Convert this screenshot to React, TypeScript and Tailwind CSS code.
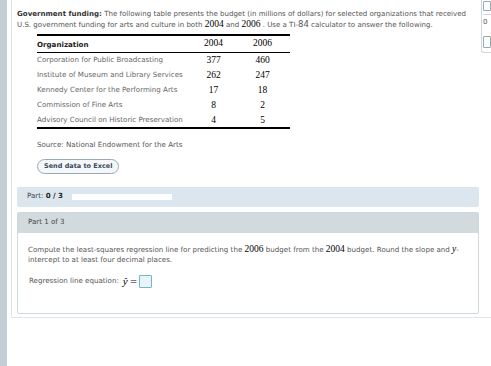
import React from 'react';

const rows = [
  { org: 'Corporation for Public Broadcasting', a: '377', b: '460' },
  { org: 'Institute of Museum and Library Services', a: '262', b: '247' },
  { org: 'Kennedy Center for the Performing Arts', a: '17', b: '18' },
  { org: 'Commission of Fine Arts', a: '8', b: '2' },
  { org: 'Advisory Council on Historic Preservation', a: '4', b: '5' },
];

const sans = "font-['DejaVu_Sans',Verdana,sans-serif]";
const serif = "font-['Liberation_Serif',serif]";

const App: React.FC = () => {
  return (
    <div className={`relative flex h-[366px] w-[491px] overflow-hidden bg-white ${sans}`}>
      <div className="h-full w-[7px] shrink-0 bg-[#c3ced4]" />
      <div className="ml-[4px] h-[318px] flex-1 border-b border-l border-[#dfe5e8]">
        {/* intro */}
        <div className="whitespace-nowrap pl-[5px] pt-[9px] text-[7.05px] leading-[10px] text-[#555]">
          <p>
            <b className="text-[#333]">Government funding:</b> The following table presents the budget (in millions of dollars) for selected organizations that received
          </p>
          <p>
            U.S. government funding for arts and culture in both <span className={`${serif} text-[9.5px] text-black`}>2004</span> and{' '}
            <span className={`${serif} text-[9.5px] text-black`}>2006</span> . Use a TI-<span className="text-[8.5px]">84</span> calculator to answer the following.
          </p>
        </div>

        {/* table */}
        <table className="ml-[25px] mt-[4px] w-[253px] border-y-2 border-black text-[7.1px] text-[#666]">
          <thead>
            <tr className="h-[15px] border-b border-black">
              <th className="pt-[3px] text-left font-bold text-[#222]">Organization</th>
              <th className={`${serif} w-[51px] pb-[2px] text-[9.5px] font-normal text-black`}>2004</th>
              <th className={`${serif} w-[51px] pb-[2px] pr-[4px] text-[9.5px] font-normal text-black`}>2006</th>
            </tr>
          </thead>
          <tbody>
            {rows.map((r) => (
              <tr key={r.org} className="h-[15px]">
                <td className="whitespace-nowrap">{r.org}</td>
                <td className={`${serif} text-center text-[9.5px] text-black`}>{r.a}</td>
                <td className={`${serif} pr-[4px] text-center text-[9.5px] text-black`}>{r.b}</td>
              </tr>
            ))}
          </tbody>
        </table>

        <p className="ml-[25px] mt-[11px] text-[7.1px] text-[#555]">Source: National Endowment for the Arts</p>
        <button className="ml-[25px] mt-[6px] rounded-full border border-[#9aaab3] bg-[#f5f8fa] px-[6px] py-[2px] text-[6.5px] font-bold text-[#3b4a5a]">
          Send data to Excel
        </button>

        {/* part bar */}
        <div className="ml-[5px] mr-[12px] mt-[12px] flex h-[20px] items-center gap-[9px] rounded-[2px] bg-[#dce6ee] pl-[10px] text-[7.1px] text-[#444]">
          <span>
            Part: <b className="text-[#222]">0 / 3</b>
          </span>
          <div className="h-[6px] w-[100px] bg-white" />
        </div>

        {/* part panel */}
        <div className="ml-[5px] mr-[12px] mt-[5px] h-[102px] rounded-[2px] border border-[#cfd8dc]">
          <div className="flex h-[20px] items-center bg-[#d3dadd] pl-[10px] text-[7.1px] text-[#444]">Part 1 of 3</div>
          <div className="whitespace-nowrap pl-[10px] pt-[11px] text-[7.1px] leading-[10px] text-[#555]">
            <p>
              Compute the least-squares regression line for predicting the <span className={`${serif} text-[9.5px] text-black`}>2006</span> budget from the{' '}
              <span className={`${serif} text-[9.5px] text-black`}>2004</span> budget. Round the slope and <i className={`${serif} text-[9.5px] text-black`}>y</i>-
            </p>
            <p>intercept to at least four decimal places.</p>
            <div className="mt-[10px] flex items-center gap-[2px] pl-[1px]">
              <span>Regression line equation:</span>
              <span className={`${serif} ml-[2px] text-[11px] italic text-black`}>ŷ</span>
              <span className="text-[9px] text-black">=</span>
              <span className="h-[13px] w-[13px] rounded-[1px] border border-[#6fb7c8] bg-[#e8f4f8]" />
            </div>
          </div>
        </div>
      </div>

      {/* right toolbar */}
      <div className="absolute right-0 top-0 flex h-[53px] w-[10px] flex-col rounded-bl-[3px] border-b border-l border-[#cfd8dc] bg-white pl-[1px] text-[7px] text-[#555]">
        <div className="mt-[1px] h-[10px] w-[8px] rounded-[1px] border border-[#9aa]" />
        <div className="mt-[3px] border-t border-[#cfd8dc] pt-[2px]">0</div>
        <div className="mt-[8px] h-[12px] w-[8px] rounded-[1px] border border-[#9aa]" />
      </div>
    </div>
  );
};

export default App;
